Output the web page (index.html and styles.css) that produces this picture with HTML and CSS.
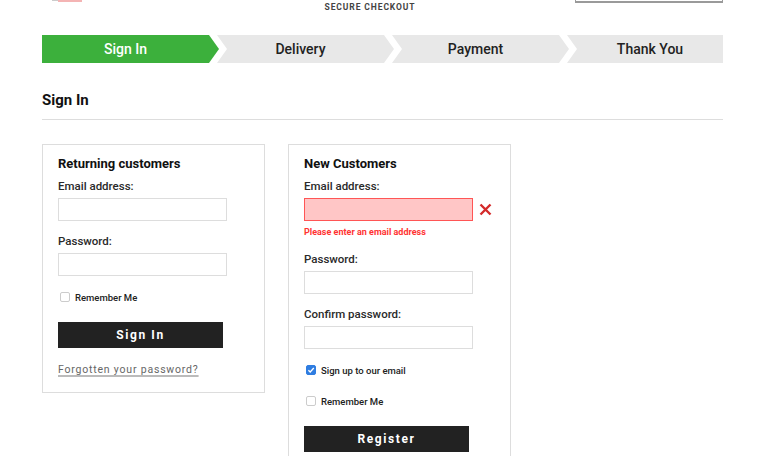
FILE: index.html
```html
<!DOCTYPE html>
<html>
<head>
<meta charset="utf-8">
<link rel="stylesheet" href="styles.css">
</head>
<body>
<div class="page">
  <header class="header">
    <div class="logo"><span class="logo-grey"></span><span class="logo-pink"></span></div>
    <div class="secure">SECURE CHECKOUT</div>
    <div class="search"></div>
  </header>
  <nav class="steps">
    <div class="step step-first active">Sign In</div>
    <div class="step">Delivery</div>
    <div class="step">Payment</div>
    <div class="step step-last">Thank You</div>
  </nav>
  <h1 class="title">Sign In</h1>
  <div class="boxes">
    <section class="box">
      <h2 class="box-title">Returning customers</h2>
      <div class="label">Email address:</div>
      <div class="input"></div>
      <div class="label">Password:</div>
      <div class="input"></div>
      <div class="check-row"><span class="cb"></span><span>Remember Me</span></div>
      <div class="btn">Sign In</div>
      <div class="link-row"><span class="link">Forgotten your password?</span></div>
    </section>
    <section class="box box-new">
      <h2 class="box-title">New Customers</h2>
      <div class="label">Email address:</div>
      <div class="input-row">
        <div class="input input-error"></div>
        <svg class="err-x" width="13" height="13" viewBox="0 0 13 13"><path d="M1.5 1.5 L11.5 11.5 M11.5 1.5 L1.5 11.5" stroke="#d42a2a" stroke-width="2.4" fill="none"/></svg>
      </div>
      <div class="error-msg">Please enter an email address</div>
      <div class="label label-after-error">Password:</div>
      <div class="input"></div>
      <div class="label">Confirm password:</div>
      <div class="input"></div>
      <div class="check-row"><span class="cb cb-checked"><svg width="10" height="10" viewBox="0 0 10 10"><path d="M2.4 5.2 L4.2 7 L7.8 3" stroke="#fff" stroke-width="1.3" fill="none"/></svg></span><span>Sign up to our email</span></div>
      <div class="check-row check-row-2"><span class="cb"></span><span>Remember Me</span></div>
      <div class="btn">Register</div>
    </section>
  </div>
</div>
</body>
</html>
```
FILE: styles.css
```css
* { box-sizing: border-box; }
html, body { margin: 0; padding: 0; background: #fff; }
body { font-family: Roboto, "Liberation Sans", Arial, sans-serif; color: #222; }
.page { width: 681px; margin-left: 42px; }

.header { display: flex; align-items: flex-start; height: 35px; }
.logo { display: flex; width: 30px; height: 2px; margin-left: 10px; }
.logo-grey { width: 6px; height: 1px; background: #ccc; }
.logo-pink { flex: 1; height: 2px; background: #f4b4b4; }
.secure { flex: 1; padding-left: 83px; text-align: center; font-size: 8.5px; line-height: 10px; padding-top: 2px; font-weight: 700; letter-spacing: 0.9px; color: #444; }
.search { width: 148px; height: 3px; border: 1px solid #9a9a9a; border-top: none; border-bottom-width: 2px; }

.steps { display: flex; height: 28px; }
.step { width: 177px; margin-left: -2px; background: #e8e8e8; display: flex; align-items: center; justify-content: center; padding-right: 10px; font-size: 14px; font-weight: 500; color: #222; clip-path: polygon(0 0, calc(100% - 10px) 0, 100% 50%, calc(100% - 10px) 100%, 0 100%, 10px 50%); }
.step-first { margin-left: 0; clip-path: polygon(0 0, calc(100% - 10px) 0, 100% 50%, calc(100% - 10px) 100%, 0 100%); }
.step-last { flex: 1; padding-right: 0; padding-left: 10px; clip-path: polygon(0 0, 100% 0, 100% 100%, 0 100%, 10px 50%); }
.active { background: #3cb03c; color: #fff; }

.title { margin: 27px 0 0; font-size: 15px; line-height: 20px; font-weight: 700; color: #111; padding-bottom: 9px; border-bottom: 1px solid #ddd; }

.boxes { display: flex; align-items: flex-start; gap: 23px; margin-top: 24px; }
.box { width: 223px; border: 1px solid #ddd; padding: 11px 15px 14px; }
.box-new { padding-bottom: 20px; }
.box-title { margin: 0; font-size: 13px; line-height: 16px; font-weight: 700; color: #111; }
.label { margin-top: 12px; font-size: 11.5px; line-height: 16px; font-weight: 500; color: #2a2a2a; }
.box-title + .label { margin-top: 6px; }
.label-after-error { margin-top: 13px; }
.input { margin-top: 4px; width: 169px; height: 23px; border: 1px solid #ddd; background: #fff; }
.input-row { display: flex; align-items: center; gap: 6px; }
.input-error { background: #ffc6c6; border-color: #f55; }
.err-x { margin-top: 4px; }
.error-msg { margin-top: 5px; font-size: 9px; line-height: 12px; font-weight: 700; color: #f33; }

.check-row { display: flex; align-items: center; gap: 5px; margin-top: 13px; height: 16px; font-size: 9.5px; font-weight: 500; color: #222; padding-left: 2px; }
.check-row-2 { margin-top: 15px; }
.cb { width: 10px; height: 10px; border: 1px solid #ccc; border-radius: 2px; background: #fff; display: flex; }
.cb-checked { background: #2f7de1; border-color: #2f7de1; }
.cb-checked svg { margin: -1px; }

.btn { margin-top: 17px; width: 165px; height: 26px; background: #222; color: #fff; font-size: 12px; font-weight: 700; letter-spacing: 1.6px; display: flex; align-items: center; justify-content: center; }
.link-row { margin-top: 12px; line-height: 16px; }
.link { font-size: 10.5px; letter-spacing: 0.8px; color: #666; text-decoration: underline; text-decoration-color: #bbb; text-decoration-thickness: 2px; text-underline-offset: 2px; }
```
